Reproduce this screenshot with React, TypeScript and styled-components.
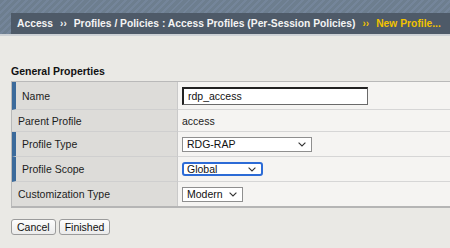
import React from "react";
import styled, { createGlobalStyle } from "styled-components";

const Global = createGlobalStyle`
  html, body {
    margin: 0;
    padding: 0;
    width: 450px;
    height: 248px;
    overflow: hidden;
    background: #eae9e5;
    font-family: "Liberation Sans", Arial, Helvetica, sans-serif;
  }
`;

const Page = styled.div`
  width: 450px;
  height: 248px;
  background: #eae9e5;
  overflow: hidden;
`;

const Header = styled.header`
  height: 36px;
  padding: 15px 0 0 11px;
  box-sizing: border-box;
  border-bottom: 2px solid #cdd1d5;
  background-color: #6d7e8f;
  background-image: repeating-linear-gradient(
    135deg,
    #6d7e8f 0px,
    #6d7e8f 3px,
    #74859a 3px,
    #74859a 5px
  );
  display: flex;
  align-items: flex-end;
`;

const Crumbs = styled.nav`
  flex: 1;
  height: 21px;
  background: #4e5a68;
  display: flex;
  align-items: center;
  gap: 7px;
  padding-left: 6px;
  white-space: nowrap;
  font-size: 10.3px;
  font-weight: bold;
  color: #f4f4f4;
`;

const Crumb = styled.span<{ $current?: boolean }>`
  color: ${(p) => (p.$current ? "#f2c200" : "#f4f4f4")};
`;

const Sep = styled.span<{ $current?: boolean }>`
  color: ${(p) => (p.$current ? "#f2c200" : "#f4f4f4")};
  font-size: 10px;
`;

const Main = styled.main`
  padding: 29px 0 0 11px;
  font-size: 10.5px;
  color: #1c1c1c;
`;

const SectionTitle = styled.h2`
  margin: 0 0 3px 0;
  font-size: 10.5px;
  line-height: 13px;
  font-weight: bold;
  color: #111;
`;

const Table = styled.table`
  width: 445px;
  border-spacing: 0;
  border-top: 1px solid #b9b9b9;
  border-left: 1px solid #b9b9b9;
  border-bottom: 2px solid #b5b5b5;
`;

const LabelCell = styled.td<{ $required?: boolean; $h: number; $last?: boolean }>`
  width: 166px;
  height: ${(p) => p.$h}px;
  box-sizing: border-box;
  padding: 0 0 0 6px;
  background: #dddcd9;
  border-right: 1px solid #c9c9c9;
  border-bottom: ${(p) => (p.$last ? "none" : "1px solid #cfcfcf")};
  border-left: ${(p) => (p.$required ? "4px solid #3b6a9b" : "none")};
  color: #1c1c1c;
  font-size: 10.5px;
  vertical-align: middle;
`;

const ValueCell = styled.td<{ $h: number; $last?: boolean }>`
  height: ${(p) => p.$h}px;
  box-sizing: border-box;
  padding: 0 0 0 4px;
  background: #f5f4f2;
  border-bottom: ${(p) => (p.$last ? "none" : "1px solid #d6d6d6")};
  font-size: 10.5px;
  vertical-align: middle;
`;

const TextInput = styled.div`
  width: 186px;
  height: 18px;
  box-sizing: border-box;
  background: #fff;
  border: 1px solid #6a6a6a;
  border-top: 2px solid #222;
  border-left: 2px solid #222;
  padding-left: 4px;
  display: flex;
  align-items: center;
  font-size: 10.5px;
  color: #111;
`;

const SelectBox = styled.div<{ $w: number; $focused?: boolean }>`
  width: ${(p) => p.$w}px;
  height: ${(p) => (p.$focused ? 14 : 15)}px;
  box-sizing: border-box;
  background: #fff;
  border: ${(p) => (p.$focused ? "2px solid #2c6bd6" : "1px solid #8f8f8f")};
  border-radius: ${(p) => (p.$focused ? "3px" : "0")};
  display: flex;
  align-items: center;
  justify-content: space-between;
  padding: 0 5px 0 ${(p) => (p.$focused ? 3 : 4)}px;
  font-size: 10.5px;
  color: #111;
`;

const Chevron = () => (
  <svg width="8" height="5" viewBox="0 0 8 5">
    <path d="M0.6 0.6 L4 4 L7.4 0.6" fill="none" stroke="#333" strokeWidth="1.1" />
  </svg>
);

const Buttons = styled.div`
  margin-top: 11px;
  display: flex;
  gap: 3px;
`;

const Button = styled.button`
  height: 16px;
  box-sizing: border-box;
  padding: 0 5px;
  border: 1px solid #9b9b9b;
  border-radius: 3px;
  background: linear-gradient(#fdfdfd, #ebebeb);
  font-family: "Liberation Sans", Arial, sans-serif;
  font-size: 10.5px;
  line-height: 12px;
  color: #111;
`;

type Row = {
  label: string;
  required?: boolean;
  h: number;
  value: React.ReactNode;
};

const rows: Row[] = [
  { label: "Name", required: true, h: 28, value: <TextInput>rdp_access</TextInput> },
  { label: "Parent Profile", h: 22, value: "access" },
  {
    label: "Profile Type",
    required: true,
    h: 25,
    value: (
      <SelectBox $w={130}>
        <span>RDG-RAP</span>
        <Chevron />
      </SelectBox>
    ),
  },
  {
    label: "Profile Scope",
    required: true,
    h: 25,
    value: (
      <SelectBox $w={81} $focused>
        <span>Global</span>
        <Chevron />
      </SelectBox>
    ),
  },
  {
    label: "Customization Type",
    h: 24,
    value: (
      <SelectBox $w={61}>
        <span>Modern</span>
        <Chevron />
      </SelectBox>
    ),
  },
];

export default function App() {
  return (
    <Page>
      <Global />
      <Header>
        <Crumbs>
          <Crumb>Access</Crumb>
          <Sep>››</Sep>
          <Crumb>Profiles / Policies : Access Profiles (Per-Session Policies)</Crumb>
          <Sep $current>››</Sep>
          <Crumb $current>New Profile...</Crumb>
        </Crumbs>
      </Header>
      <Main>
        <SectionTitle>General Properties</SectionTitle>
        <Table>
          <tbody>
            {rows.map((r, i) => {
              const last = i === rows.length - 1;
              return (
                <tr key={r.label}>
                  <LabelCell $required={r.required} $h={r.h} $last={last}>
                    {r.label}
                  </LabelCell>
                  <ValueCell $h={r.h} $last={last}>
                    {r.value}
                  </ValueCell>
                </tr>
              );
            })}
          </tbody>
        </Table>
        <Buttons>
          <Button>Cancel</Button>
          <Button>Finished</Button>
        </Buttons>
      </Main>
    </Page>
  );
}
